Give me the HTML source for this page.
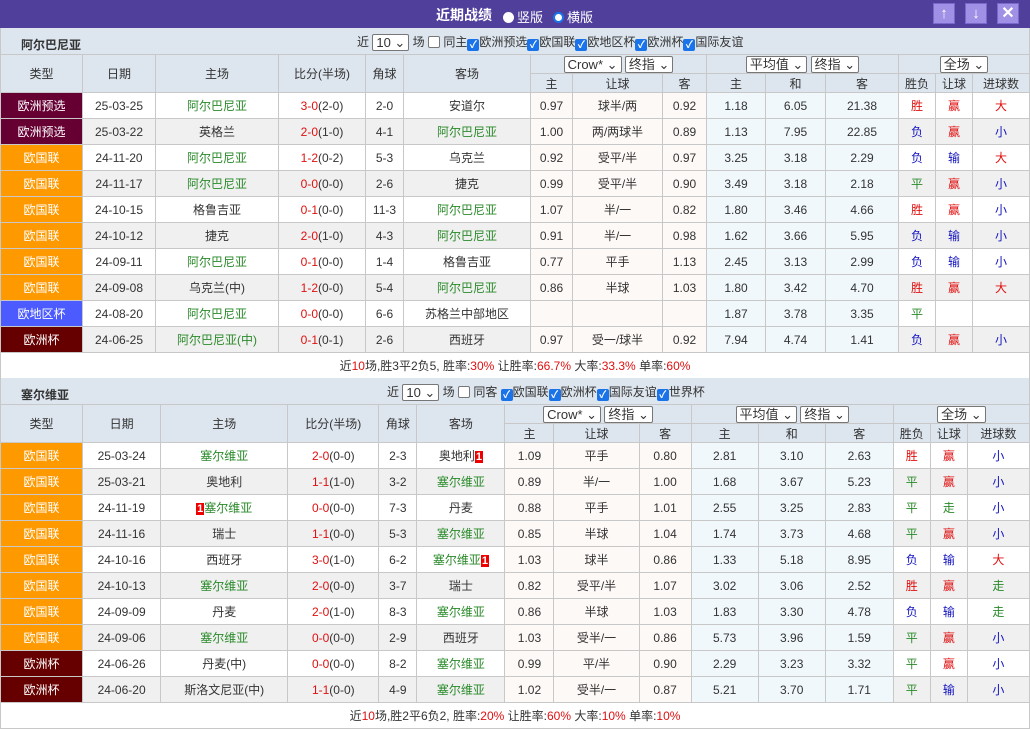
<!DOCTYPE html>
<html><head><meta charset="utf-8">
<style>
*{box-sizing:border-box;margin:0;padding:0}
body{width:1030px;height:728px;overflow:hidden;background:#fff;font-family:"Liberation Sans","Noto Sans CJK SC",sans-serif;font-size:12px;color:#333;position:relative}
.top{position:absolute;left:0;top:0;width:1030px;height:28px;background:#503f9b;color:#fff;font-size:13px}
.top .t{position:absolute;left:436px;top:5px;font-weight:bold;font-size:14px}
.rad{display:inline-block;width:11px;height:11px;border-radius:50%;background:#fff;vertical-align:-1px;margin-right:3px}
.rad.on{background:#fff;border:2px solid #1a73e8;box-shadow:inset 0 0 0 2px #fff}
.btn{position:absolute;top:3px;width:22px;height:21px;background:#a090e6;border:1px solid #7a68cc;color:#fff;text-align:center;font-size:15px;line-height:19px;font-weight:bold}
.sec{position:absolute;left:0;width:1030px;height:26px;background:#dde5ee;border-left:1px solid #c8c8c8;border-right:1px solid #c8c8c8}
.sec .n{position:absolute;left:20px;top:8px;font-weight:bold;font-size:12px}
.sec .f{position:absolute;top:5px;font-size:12px;white-space:nowrap}
.sel{display:inline-block;border:1px solid #777;background:#fff;height:17px;line-height:15px;padding:0 3px;font-size:13px;vertical-align:middle;border-radius:2px}
.cb{display:inline-block;width:12px;height:12px;border:1px solid #777;border-radius:2px;vertical-align:-2px;background:#fff}
.cb.on{background:#1a73e8;border-color:#1a73e8;color:#fff;font-size:10px;line-height:11px;text-align:center;font-weight:bold}
table{position:absolute;left:0;border-collapse:collapse;table-layout:fixed;width:1030px}
td,th{border:1px solid #c8c8c8;text-align:center;font-weight:normal;white-space:nowrap;overflow:hidden;font-size:12px}
th{background:#dde5ee;height:19px}
tr.d td{height:26px}
tr.d:nth-child(even) td{background:#f0f0f0}
tr.d td.p{background:#fdf9f7}
tr.d td.b{background:#f1f8fc}
.ty{color:#fff!important}
.q{background:#660033!important}.o{background:#ff9900!important}.e{background:#4b5bff!important}.c{background:#660000!important}
.g{color:#2a8a2a}.r{color:#e01010}.bl{color:#1515c0}
.mk{background:#e00;color:#fff;font-weight:bold;padding:0 1px;font-size:11px}
.sum td{height:26px;background:#fff}
</style></head><body>
<div class="top"><span class="t">近期战绩</span>
<span style="position:absolute;left:503px;top:7px"><span class="rad"></span>竖版</span>
<span style="position:absolute;left:553px;top:7px"><span class="rad on"></span>横版</span>
<div class="btn" style="left:933px">↑</div><div class="btn" style="left:965px">↓</div><div class="btn" style="left:997px;font-size:16px">✕</div>
</div>

<div class="sec" style="top:28px"><span class="n">阿尔巴尼亚</span>
<span class="f" style="left:356px">近 <span class="sel">10 ⌄</span> 场 <span class="cb"></span> 同主<span class="cb on">✓</span>欧洲预选<span class="cb on">✓</span>欧国联<span class="cb on">✓</span>欧地区杯<span class="cb on">✓</span>欧洲杯<span class="cb on">✓</span>国际友谊</span></div>

<table style="top:54px">
<colgroup><col style="width:82px"><col style="width:73px"><col style="width:123px"><col style="width:87px"><col style="width:38px"><col style="width:127px"><col style="width:42px"><col style="width:90px"><col style="width:44px"><col style="width:59px"><col style="width:60px"><col style="width:73px"><col style="width:37px"><col style="width:37px"><col style="width:57px"></colgroup>
<tr><th rowspan="2">类型</th><th rowspan="2">日期</th><th rowspan="2">主场</th><th rowspan="2">比分(半场)</th><th rowspan="2">角球</th><th rowspan="2">客场</th><th colspan="3"><span class="sel">Crow* ⌄</span> <span class="sel">终指 ⌄</span></th><th colspan="3"><span class="sel">平均值 ⌄</span> <span class="sel">终指 ⌄</span></th><th colspan="3"><span class="sel">全场 ⌄</span></th></tr>
<tr><th>主</th><th>让球</th><th>客</th><th>主</th><th>和</th><th>客</th><th>胜负</th><th>让球</th><th>进球数</th></tr>
<tr class="d"><td class="ty q">欧洲预选</td><td>25-03-25</td><td class="g">阿尔巴尼亚</td><td><span class="r">3-0</span>(2-0)</td><td>2-0</td><td>安道尔</td><td class="p">0.97</td><td class="p">球半/两</td><td class="p">0.92</td><td class="b">1.18</td><td class="b">6.05</td><td class="b">21.38</td><td class="r">胜</td><td class="r">赢</td><td class="r">大</td></tr>
<tr class="d"><td class="ty q">欧洲预选</td><td>25-03-22</td><td>英格兰</td><td><span class="r">2-0</span>(1-0)</td><td>4-1</td><td class="g">阿尔巴尼亚</td><td class="p">1.00</td><td class="p">两/两球半</td><td class="p">0.89</td><td class="b">1.13</td><td class="b">7.95</td><td class="b">22.85</td><td class="bl">负</td><td class="r">赢</td><td class="bl">小</td></tr>
<tr class="d"><td class="ty o">欧国联</td><td>24-11-20</td><td class="g">阿尔巴尼亚</td><td><span class="r">1-2</span>(0-2)</td><td>5-3</td><td>乌克兰</td><td class="p">0.92</td><td class="p">受平/半</td><td class="p">0.97</td><td class="b">3.25</td><td class="b">3.18</td><td class="b">2.29</td><td class="bl">负</td><td class="bl">输</td><td class="r">大</td></tr>
<tr class="d"><td class="ty o">欧国联</td><td>24-11-17</td><td class="g">阿尔巴尼亚</td><td><span class="r">0-0</span>(0-0)</td><td>2-6</td><td>捷克</td><td class="p">0.99</td><td class="p">受平/半</td><td class="p">0.90</td><td class="b">3.49</td><td class="b">3.18</td><td class="b">2.18</td><td class="g">平</td><td class="r">赢</td><td class="bl">小</td></tr>
<tr class="d"><td class="ty o">欧国联</td><td>24-10-15</td><td>格鲁吉亚</td><td><span class="r">0-1</span>(0-0)</td><td>11-3</td><td class="g">阿尔巴尼亚</td><td class="p">1.07</td><td class="p">半/一</td><td class="p">0.82</td><td class="b">1.80</td><td class="b">3.46</td><td class="b">4.66</td><td class="r">胜</td><td class="r">赢</td><td class="bl">小</td></tr>
<tr class="d"><td class="ty o">欧国联</td><td>24-10-12</td><td>捷克</td><td><span class="r">2-0</span>(1-0)</td><td>4-3</td><td class="g">阿尔巴尼亚</td><td class="p">0.91</td><td class="p">半/一</td><td class="p">0.98</td><td class="b">1.62</td><td class="b">3.66</td><td class="b">5.95</td><td class="bl">负</td><td class="bl">输</td><td class="bl">小</td></tr>
<tr class="d"><td class="ty o">欧国联</td><td>24-09-11</td><td class="g">阿尔巴尼亚</td><td><span class="r">0-1</span>(0-0)</td><td>1-4</td><td>格鲁吉亚</td><td class="p">0.77</td><td class="p">平手</td><td class="p">1.13</td><td class="b">2.45</td><td class="b">3.13</td><td class="b">2.99</td><td class="bl">负</td><td class="bl">输</td><td class="bl">小</td></tr>
<tr class="d"><td class="ty o">欧国联</td><td>24-09-08</td><td>乌克兰(中)</td><td><span class="r">1-2</span>(0-0)</td><td>5-4</td><td class="g">阿尔巴尼亚</td><td class="p">0.86</td><td class="p">半球</td><td class="p">1.03</td><td class="b">1.80</td><td class="b">3.42</td><td class="b">4.70</td><td class="r">胜</td><td class="r">赢</td><td class="r">大</td></tr>
<tr class="d"><td class="ty e">欧地区杯</td><td>24-08-20</td><td class="g">阿尔巴尼亚</td><td><span class="r">0-0</span>(0-0)</td><td>6-6</td><td>苏格兰中部地区</td><td class="p"></td><td class="p"></td><td class="p"></td><td class="b">1.87</td><td class="b">3.78</td><td class="b">3.35</td><td class="g">平</td><td></td><td></td></tr>
<tr class="d"><td class="ty c">欧洲杯</td><td>24-06-25</td><td class="g">阿尔巴尼亚(中)</td><td><span class="r">0-1</span>(0-1)</td><td>2-6</td><td>西班牙</td><td class="p">0.97</td><td class="p">受一/球半</td><td class="p">0.92</td><td class="b">7.94</td><td class="b">4.74</td><td class="b">1.41</td><td class="bl">负</td><td class="r">赢</td><td class="bl">小</td></tr>
<tr class="sum"><td colspan="15">近<span class="r">10</span>场,胜3平2负5, 胜率:<span class="r">30%</span> 让胜率:<span class="r">66.7%</span> 大率:<span class="r">33.3%</span> 单率:<span class="r">60%</span></td></tr>
</table>

<div class="sec" style="top:378px"><span class="n">塞尔维亚</span>
<span class="f" style="left:386px">近 <span class="sel">10 ⌄</span> 场 <span class="cb"></span> 同客 <span class="cb on">✓</span>欧国联<span class="cb on">✓</span>欧洲杯<span class="cb on">✓</span>国际友谊<span class="cb on">✓</span>世界杯</span></div>

<table style="top:404px">
<colgroup><col style="width:82px"><col style="width:78px"><col style="width:127px"><col style="width:91px"><col style="width:38px"><col style="width:88px"><col style="width:49px"><col style="width:85px"><col style="width:52px"><col style="width:67px"><col style="width:67px"><col style="width:68px"><col style="width:37px"><col style="width:37px"><col style="width:62px"></colgroup>
<tr><th rowspan="2">类型</th><th rowspan="2">日期</th><th rowspan="2">主场</th><th rowspan="2">比分(半场)</th><th rowspan="2">角球</th><th rowspan="2">客场</th><th colspan="3"><span class="sel">Crow* ⌄</span> <span class="sel">终指 ⌄</span></th><th colspan="3"><span class="sel">平均值 ⌄</span> <span class="sel">终指 ⌄</span></th><th colspan="3"><span class="sel">全场 ⌄</span></th></tr>
<tr><th>主</th><th>让球</th><th>客</th><th>主</th><th>和</th><th>客</th><th>胜负</th><th>让球</th><th>进球数</th></tr>
<tr class="d"><td class="ty o">欧国联</td><td>25-03-24</td><td class="g">塞尔维亚</td><td><span class="r">2-0</span>(0-0)</td><td>2-3</td><td>奥地利<span class="mk">1</span></td><td class="p">1.09</td><td class="p">平手</td><td class="p">0.80</td><td class="b">2.81</td><td class="b">3.10</td><td class="b">2.63</td><td class="r">胜</td><td class="r">赢</td><td class="bl">小</td></tr>
<tr class="d"><td class="ty o">欧国联</td><td>25-03-21</td><td>奥地利</td><td><span class="r">1-1</span>(1-0)</td><td>3-2</td><td class="g">塞尔维亚</td><td class="p">0.89</td><td class="p">半/一</td><td class="p">1.00</td><td class="b">1.68</td><td class="b">3.67</td><td class="b">5.23</td><td class="g">平</td><td class="r">赢</td><td class="bl">小</td></tr>
<tr class="d"><td class="ty o">欧国联</td><td>24-11-19</td><td class="g"><span class="mk">1</span>塞尔维亚</td><td><span class="r">0-0</span>(0-0)</td><td>7-3</td><td>丹麦</td><td class="p">0.88</td><td class="p">平手</td><td class="p">1.01</td><td class="b">2.55</td><td class="b">3.25</td><td class="b">2.83</td><td class="g">平</td><td class="g">走</td><td class="bl">小</td></tr>
<tr class="d"><td class="ty o">欧国联</td><td>24-11-16</td><td>瑞士</td><td><span class="r">1-1</span>(0-0)</td><td>5-3</td><td class="g">塞尔维亚</td><td class="p">0.85</td><td class="p">半球</td><td class="p">1.04</td><td class="b">1.74</td><td class="b">3.73</td><td class="b">4.68</td><td class="g">平</td><td class="r">赢</td><td class="bl">小</td></tr>
<tr class="d"><td class="ty o">欧国联</td><td>24-10-16</td><td>西班牙</td><td><span class="r">3-0</span>(1-0)</td><td>6-2</td><td class="g">塞尔维亚<span class="mk">1</span></td><td class="p">1.03</td><td class="p">球半</td><td class="p">0.86</td><td class="b">1.33</td><td class="b">5.18</td><td class="b">8.95</td><td class="bl">负</td><td class="bl">输</td><td class="r">大</td></tr>
<tr class="d"><td class="ty o">欧国联</td><td>24-10-13</td><td class="g">塞尔维亚</td><td><span class="r">2-0</span>(0-0)</td><td>3-7</td><td>瑞士</td><td class="p">0.82</td><td class="p">受平/半</td><td class="p">1.07</td><td class="b">3.02</td><td class="b">3.06</td><td class="b">2.52</td><td class="r">胜</td><td class="r">赢</td><td class="g">走</td></tr>
<tr class="d"><td class="ty o">欧国联</td><td>24-09-09</td><td>丹麦</td><td><span class="r">2-0</span>(1-0)</td><td>8-3</td><td class="g">塞尔维亚</td><td class="p">0.86</td><td class="p">半球</td><td class="p">1.03</td><td class="b">1.83</td><td class="b">3.30</td><td class="b">4.78</td><td class="bl">负</td><td class="bl">输</td><td class="g">走</td></tr>
<tr class="d"><td class="ty o">欧国联</td><td>24-09-06</td><td class="g">塞尔维亚</td><td><span class="r">0-0</span>(0-0)</td><td>2-9</td><td>西班牙</td><td class="p">1.03</td><td class="p">受半/一</td><td class="p">0.86</td><td class="b">5.73</td><td class="b">3.96</td><td class="b">1.59</td><td class="g">平</td><td class="r">赢</td><td class="bl">小</td></tr>
<tr class="d"><td class="ty c">欧洲杯</td><td>24-06-26</td><td>丹麦(中)</td><td><span class="r">0-0</span>(0-0)</td><td>8-2</td><td class="g">塞尔维亚</td><td class="p">0.99</td><td class="p">平/半</td><td class="p">0.90</td><td class="b">2.29</td><td class="b">3.23</td><td class="b">3.32</td><td class="g">平</td><td class="r">赢</td><td class="bl">小</td></tr>
<tr class="d"><td class="ty c">欧洲杯</td><td>24-06-20</td><td>斯洛文尼亚(中)</td><td><span class="r">1-1</span>(0-0)</td><td>4-9</td><td class="g">塞尔维亚</td><td class="p">1.02</td><td class="p">受半/一</td><td class="p">0.87</td><td class="b">5.21</td><td class="b">3.70</td><td class="b">1.71</td><td class="g">平</td><td class="bl">输</td><td class="bl">小</td></tr>
<tr class="sum"><td colspan="15">近<span class="r">10</span>场,胜2平6负2, 胜率:<span class="r">20%</span> 让胜率:<span class="r">60%</span> 大率:<span class="r">10%</span> 单率:<span class="r">10%</span></td></tr>
</table>
</body></html>
